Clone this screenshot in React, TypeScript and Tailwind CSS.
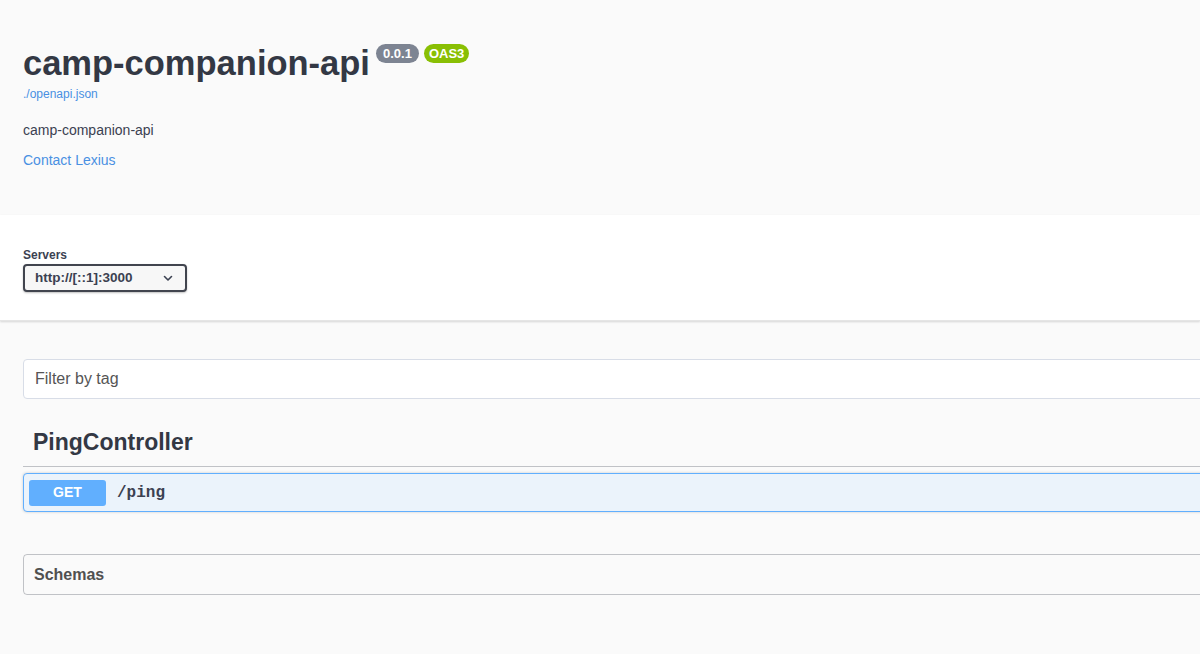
export default function App() {
  return (
    <main
      className="min-h-[654px] w-full overflow-hidden bg-[#fafafa] text-[#3b4151]"
      style={{ fontFamily: '"Liberation Sans", Arial, sans-serif' }}
    >
      {/* Info */}
      <section className="pl-[23px] pt-[40px] h-[215px]">
        <div className="flex items-start">
          <h1 className="text-[34.5px] leading-[46px] font-bold text-[#333844]">camp-companion-api</h1>
          <div className="flex gap-[5px] ml-[6px] mt-[4px]">
            <span className="rounded-[57px] bg-[#7d8492] px-[7px] h-[19px] leading-[19px] text-[13px] font-bold text-white">0.0.1</span>
            <span className="rounded-[57px] bg-[#89bf04] px-[5px] h-[19px] leading-[19px] text-[13px] font-bold text-white">OAS3</span>
          </div>
        </div>
        <a className="block text-[12px] leading-[14px] text-[#4990e2] mt-[1px]">./openapi.json</a>
        <p className="text-[14px] mt-[20px] leading-[18px]">camp-companion-api</p>
        <a className="block text-[14px] mt-[12px] leading-[18px] text-[#4990e2]">Contact Lexius</a>
      </section>

      {/* Servers */}
      <section className="bg-white h-[106px] pl-[23px] pt-[33px] shadow-[0_1px_2px_0_rgba(0,0,0,0.15)] border-b border-[#e5e5e5]">
        <div className="text-[12px] font-bold leading-[14px] mb-[2px]">Servers</div>
        <div className="flex items-center justify-between w-[164px] h-[28px] border-2 border-[#41444e] rounded-[4px] bg-[#f7f7f7] pl-[10px] pr-[12px] shadow-[0_1px_2px_0_rgba(0,0,0,0.25)]">
          <span className="text-[13.5px] font-bold text-[#3b4151]">http://[::1]:3000</span>
          <svg width="10" height="7" viewBox="0 0 10 7" fill="none">
            <path d="M1.5 1.5 L5 5 L8.5 1.5" stroke="#3b4151" strokeWidth="1.6" strokeLinecap="round" strokeLinejoin="round" />
          </svg>
        </div>
      </section>

      {/* Operations */}
      <section className="pl-[23px] pt-[38px]">
        <div className="-mr-[10px] h-[40px] bg-white border border-[#d8dde7] rounded-[4px] flex items-center pl-[11px] text-[16px] text-[#555]">
          Filter by tag
        </div>

        <div className="mt-[23px] -mr-[10px]">
          <h3 className="h-[45px] flex items-center pl-[10px] pb-[3px] text-[23px] font-bold text-[#333844] border-b border-[rgba(59,65,81,0.3)]">
            PingController
          </h3>
          <div className="mt-[6px] h-[39px] bg-[#ebf3fb] border border-[#61affe] rounded-[4px] flex items-center pl-[5px] shadow-[0_0_3px_rgba(0,0,0,0.19)]">
            <span className="w-[77px] h-[26px] rounded-[3px] bg-[#61affe] text-white text-[14px] font-bold flex items-center justify-center">
              GET
            </span>
            <span
              className="ml-[11px] text-[16px] font-bold text-[#3b4151]"
              style={{ fontFamily: '"Liberation Mono", "Courier New", monospace' }}
            >
              /ping
            </span>
          </div>
        </div>

        <div className="mt-[42px] -mr-[10px] h-[41px] border border-[rgba(59,65,81,0.3)] rounded-[4px] flex items-center pl-[10px]">
          <span className="text-[16px] font-bold text-[#505050]">Schemas</span>
        </div>
      </section>
    </main>
  );
}
